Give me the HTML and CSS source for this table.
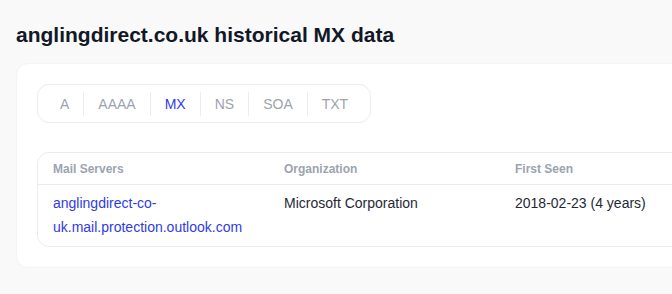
FILE: index.html
```html
<!DOCTYPE html>
<html>
<head>
<meta charset="utf-8">
<link rel="stylesheet" href="styles.css">
</head>
<body>
<h1 class="title">anglingdirect.co.uk historical MX data</h1>
<div class="card">
  <div class="tabs">
    <span class="tab">A</span>
    <span class="tab">AAAA</span>
    <span class="tab active">MX</span>
    <span class="tab">NS</span>
    <span class="tab">SOA</span>
    <span class="tab">TXT</span>
  </div>
  <div class="table">
    <div class="row head">
      <div class="cell">Mail Servers</div>
      <div class="cell">Organization</div>
      <div class="cell">First Seen</div>
    </div>
    <div class="row">
      <div class="cell"><a class="link" href="#">anglingdirect-co-uk.mail.protection.outlook.com</a></div>
      <div class="cell">Microsoft Corporation</div>
      <div class="cell">2018-02-23 (4 years)</div>
    </div>
  </div>
</div>
</body>
</html>
```
FILE: styles.css
```css
html, body {
  margin: 0;
  padding: 0;
  background: #f9f9f9;
  overflow: hidden;
}
body {
  font-family: "Liberation Sans", Arial, sans-serif;
  width: 1100px;
}
.title {
  margin: 21px 0 14px 16px;
  font-size: 21px;
  line-height: 28px;
  font-weight: 700;
  color: #111827;
}
.card {
  margin-left: 16px;
  width: 1000px;
  background: #ffffff;
  border: 1px solid #f4f4f5;
  border-radius: 12px;
  padding: 20px;
}
.tabs {
  display: inline-flex;
  border: 1px solid #ececee;
  border-radius: 12px;
  padding: 7px 8px 6px;
}
.tab {
  font-size: 14px;
  line-height: 24px;
  padding: 0 14px;
  color: #9ca3af;
  border-left: 1px solid #ececee;
}
.tab:first-child {
  border-left: none;
}
.tab.active {
  color: #2f3be6;
}
.table {
  margin-top: 29px;
  border: 1px solid #ececee;
  border-radius: 12px;
}
.row {
  display: grid;
  grid-template-columns: 231px 231px 231px;
}
.head {
  border-bottom: 1px solid #ececee;
}
.head .cell {
  font-size: 12px;
  line-height: 16px;
  font-weight: 700;
  color: #9ca3af;
  padding: 8px 15px 7px;
}
.row .cell {
  box-sizing: border-box;
}
.row:not(.head) .cell {
  font-size: 14px;
  line-height: 24px;
  color: #1f2937;
  padding: 6px 15px 7px;
}
.link {
  color: #2f3be6;
  text-decoration: none;
}
```
